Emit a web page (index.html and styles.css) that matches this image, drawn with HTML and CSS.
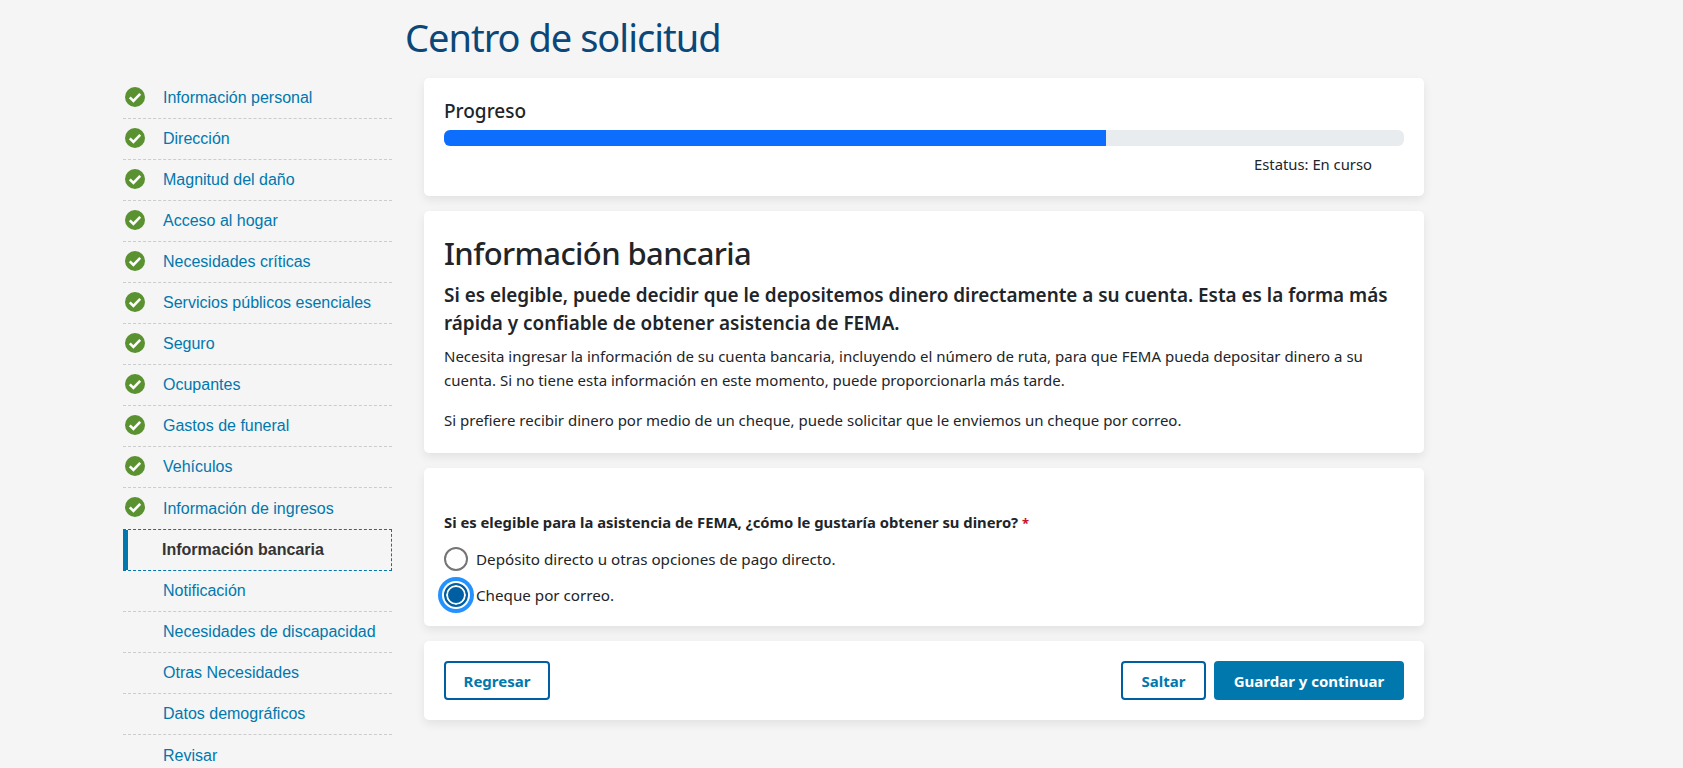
FILE: index.html
```html
<!DOCTYPE html>
<html lang="es">
<head>
	<meta charset="utf-8">
	<meta name="viewport" content="width=device-width">
	<title>Centro de solicitud</title>
	<link rel="stylesheet" href="styles.css">
</head>
<body>

	<div class="page">
		<nav class="steps">
			<ul>
				<li class="step done"><svg class="check" viewBox="0 0 20 20"><circle cx="10" cy="10" r="10"/><path d="M4.8 10.4l3.6 3.5 6.8-7"/></svg><a href="#">Información personal</a></li>
				<li class="step done"><svg class="check" viewBox="0 0 20 20"><circle cx="10" cy="10" r="10"/><path d="M4.8 10.4l3.6 3.5 6.8-7"/></svg><a href="#">Dirección</a></li>
				<li class="step done"><svg class="check" viewBox="0 0 20 20"><circle cx="10" cy="10" r="10"/><path d="M4.8 10.4l3.6 3.5 6.8-7"/></svg><a href="#">Magnitud del daño</a></li>
				<li class="step done"><svg class="check" viewBox="0 0 20 20"><circle cx="10" cy="10" r="10"/><path d="M4.8 10.4l3.6 3.5 6.8-7"/></svg><a href="#">Acceso al hogar</a></li>
				<li class="step done"><svg class="check" viewBox="0 0 20 20"><circle cx="10" cy="10" r="10"/><path d="M4.8 10.4l3.6 3.5 6.8-7"/></svg><a href="#">Necesidades críticas</a></li>
				<li class="step done"><svg class="check" viewBox="0 0 20 20"><circle cx="10" cy="10" r="10"/><path d="M4.8 10.4l3.6 3.5 6.8-7"/></svg><a href="#">Servicios públicos esenciales</a></li>
				<li class="step done"><svg class="check" viewBox="0 0 20 20"><circle cx="10" cy="10" r="10"/><path d="M4.8 10.4l3.6 3.5 6.8-7"/></svg><a href="#">Seguro</a></li>
				<li class="step done"><svg class="check" viewBox="0 0 20 20"><circle cx="10" cy="10" r="10"/><path d="M4.8 10.4l3.6 3.5 6.8-7"/></svg><a href="#">Ocupantes</a></li>
				<li class="step done"><svg class="check" viewBox="0 0 20 20"><circle cx="10" cy="10" r="10"/><path d="M4.8 10.4l3.6 3.5 6.8-7"/></svg><a href="#">Gastos de funeral</a></li>
				<li class="step done"><svg class="check" viewBox="0 0 20 20"><circle cx="10" cy="10" r="10"/><path d="M4.8 10.4l3.6 3.5 6.8-7"/></svg><a href="#">Vehículos</a></li>
				<li class="step done before-current"><svg class="check" viewBox="0 0 20 20"><circle cx="10" cy="10" r="10"/><path d="M4.8 10.4l3.6 3.5 6.8-7"/></svg><a href="#">Información de ingresos</a></li>
				<li class="step current"><a href="#">Información bancaria</a></li>
				<li class="step"><a href="#">Notificación</a></li>
				<li class="step"><a href="#">Necesidades de discapacidad</a></li>
				<li class="step"><a href="#">Otras Necesidades</a></li>
				<li class="step"><a href="#">Datos demográficos</a></li>
				<li class="step last"><a href="#">Revisar</a></li>
			</ul>
		</nav>

		<main class="content">
			<h1 class="page-title">Centro de solicitud</h1>

			<section class="card progress-card">
				<div class="progress-label">Progreso</div>
				<div class="progress"><div class="progress-bar" style="width: 69%"></div></div>
				<div class="progress-status">Estatus: En curso</div>
			</section>

			<section class="card intro-card">
				<h2>Información bancaria</h2>
				<h3>Si es elegible, puede decidir que le depositemos dinero directamente a su cuenta. Esta es la forma más rápida y confiable de obtener asistencia de FEMA.</h3>
				<p>Necesita ingresar la información de su cuenta bancaria, incluyendo el número de ruta, para que FEMA pueda depositar dinero a su cuenta. Si no tiene esta información en este momento, puede proporcionarla más tarde.</p>
				<p>Si prefiere recibir dinero por medio de un cheque, puede solicitar que le enviemos un cheque por correo.</p>
			</section>

			<section class="card question-card">
				<div class="question">Si es elegible para la asistencia de FEMA, ¿cómo le gustaría obtener su dinero? <span class="required">*</span></div>
				<div class="radio-row"><span class="radio"></span><span>Depósito directo u otras opciones de pago directo.</span></div>
				<div class="radio-row"><span class="radio selected"></span><span>Cheque por correo.</span></div>
			</section>

			<section class="card actions-card">
				<button class="btn btn-outline" type="button">Regresar</button>
				<div class="actions-right">
					<button class="btn btn-outline btn-skip" type="button">Saltar</button>
					<button class="btn btn-primary" type="button">Guardar y continuar</button>
				</div>
			</section>
		</main>
	</div>

</body>
</html>
```

FILE: styles.css
```css
* {
	box-sizing: border-box;
	padding: 0;
	margin: 0;
}

html, body {
	height: 100%;
	overflow: hidden;
}

body {
	background-color: #F5F5F5;
	color: #212529;
	font-family: "Noto Sans", sans-serif;
	font-size: 15px;
}

.page {
	display: flex;
	align-items: flex-start;
	width: 1301px;
	margin-left: 123px;
}

/* side menu */
.steps {
	width: 269px;
	margin-top: 78px;
	margin-right: 32px;
	flex: none;
	font-family: "Liberation Sans", Arial, sans-serif;
	font-size: 16px;
}

.steps ul {
	list-style: none;
}

.step {
	position: relative;
	display: flex;
	align-items: center;
	height: 41px;
	padding-left: 40px;
	border-bottom: 1px dashed #CCC;
}

.step a {
	color: #0078AE;
	text-decoration: none;
}

.step.before-current,
.step.last {
	border-bottom: 0;
}

.step.current {
	height: 42px;
	padding-left: 34px;
	border: 1px dashed #0078AE;
	border-left: 5px solid #0078AE;
}

.step.current a {
	color: #333;
	font-weight: 700;
}

.check {
	position: absolute;
	left: 2px;
	top: 9px;
	width: 20px;
	height: 20px;
}

.check circle {
	fill: #5A9232;
}

.check path {
	fill: none;
	stroke: #FFF;
	stroke-width: 2.6;
}

/* main column */
.content {
	width: 1000px;
}

.page-title {
	margin: 14px 0 18px -19px;
	color: #0B4778;
	font-size: 38px;
	font-weight: 400;
	line-height: 46px;
	letter-spacing: -1px;
}

.card {
	margin-bottom: 15px;
	padding: 20px;
	border-radius: 5px;
	background-color: #FFF;
	box-shadow: 0 4px 10px rgba(0, 0, 0, .08);
}

.progress-card {
	height: 118px;
	padding-top: 21px;
}

.progress-label {
	font-size: 19px;
	font-weight: 500;
	line-height: 25px;
	margin-bottom: 6px;
}

.progress {
	height: 16px;
	border-radius: 6px;
	background-color: #E9ECEF;
	overflow: hidden;
}

.progress-bar {
	height: 100%;
	background-color: #0D6EFD;
}

.progress-status {
	margin-top: 8px;
	padding-right: 32px;
	font-size: 14.8px;
	line-height: 20px;
	text-align: right;
}

.intro-card {
	height: 242px;
	padding-top: 20px;
}

.intro-card h2 {
	margin-bottom: 6px;
	font-size: 31px;
	font-weight: 500;
	line-height: 44px;
	letter-spacing: -.6px;
}

.intro-card h3 {
	margin-bottom: 7px;
	font-size: 18.9px;
	font-weight: 600;
	line-height: 28px;
}

.intro-card p {
	margin-bottom: 16px;
	font-size: 15px;
	line-height: 24px;
}

.question-card {
	height: 158px;
	padding-top: 44px;
}

.question {
	height: 20px;
	margin-bottom: 9px;
	font-size: 14.8px;
	font-weight: 700;
	line-height: 20px;
}

.required {
	color: #C8102E;
	font-size: 13px;
	line-height: 1;
}

.radio-row {
	display: flex;
	align-items: center;
	gap: 8px;
	height: 36px;
	font-size: 15.2px;
}

.radio {
	flex: none;
	width: 24px;
	height: 24px;
	border: 2px solid #757575;
	border-radius: 50%;
	background-color: #FFF;
}

.radio.selected {
	border-color: #005EA2;
	background-color: #005EA2;
	box-shadow: inset 0 0 0 2px #FFF, 0 0 0 2px #FFF, 0 0 0 6px #2491FF;
}

.actions-card {
	display: flex;
	justify-content: space-between;
	height: 79px;
}

.actions-right {
	display: flex;
	gap: 8px;
}

.btn {
	height: 39px;
	border-radius: 4px;
	font-family: "Noto Sans", sans-serif;
	font-size: 15px;
	font-weight: 700;
}

.btn-outline {
	width: 106px;
	border: 2px solid #005EA2;
	background-color: #FFF;
	color: #0078AE;
}

.btn-outline.btn-skip {
	width: 85px;
}

.btn-primary {
	width: 190px;
	border: 0;
	background-color: #0078AE;
	color: #FFF;
}
```
